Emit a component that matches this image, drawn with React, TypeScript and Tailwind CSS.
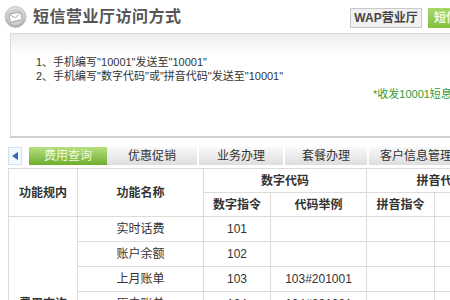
const FONT = { fontFamily: '"Liberation Sans", "Noto Sans CJK SC", sans-serif' };

const TABS = ['优惠促销', '业务办理', '套餐办理', '客户信息管理'];
const TAB_WIDTHS = ['w-[92px]', 'w-[86px]', 'w-[84px]', 'w-[96px]'];

const ROWS = [
  { name: '实时话费', code: '101', example: '' },
  { name: '账户余额', code: '102', example: '' },
  { name: '上月账单', code: '103', example: '103#201001' },
  { name: '历史账单', code: '104', example: '104#201001' },
  { name: '积分查询', code: '105', example: '' },
  { name: '套餐余量', code: '106', example: '' },
  { name: '详单查询', code: '107', example: '' },
];

function MailIcon() {
  return (
    <svg width="23" height="22" viewBox="0 0 23 22">
      <defs>
        <linearGradient id="ring" x1="0" y1="0" x2="0" y2="1">
          <stop offset="0" stopColor="#e4e4e4" />
          <stop offset="1" stopColor="#a9a9a9" />
        </linearGradient>
      </defs>
      <circle cx="11.5" cy="11" r="10.5" fill="url(#ring)" stroke="#c4c4c4" />
      <circle cx="11.5" cy="11" r="8" fill="#cfcfcf" />
      <g transform="rotate(-12 11.5 11)">
        <rect x="5.5" y="7" width="12" height="8" rx="1" fill="#fff" stroke="#9a9a9a" strokeWidth="0.8" />
        <path d="M6 7.5 L11.5 11.8 L17 7.5" fill="none" stroke="#9a9a9a" strokeWidth="0.8" />
      </g>
    </svg>
  );
}

export default function App() {
  const th = 'border border-[#dcdcdc] h-[24px] text-center font-bold text-[12px] text-[#333]';
  const td = 'border border-[#dcdcdc] h-[25px] text-center text-[12px] text-[#333]';

  return (
    <div className="w-[450px] h-[300px] overflow-hidden bg-white" style={FONT}>
      <div className="w-[560px]">
        {/* title bar */}
        <div className="flex items-center h-[33px] pl-[4px]">
          <MailIcon />
          <h1 className="ml-[6px] text-[16px] font-bold text-[#555] tracking-[0.5px]">短信营业厅访问方式</h1>
          <div className="ml-auto flex items-center gap-[6px] pr-[60px] mt-[3px]">
            <span className="w-[72px] h-[20px] flex items-center justify-center border border-[#c8c8c8] bg-[#f1f1f1] text-[12px] font-bold text-[#444]">
              WAP营业厅
            </span>
            <span className="w-[72px] h-[20px] flex items-center justify-center bg-gradient-to-b from-[#a8d96a] to-[#84c03c] text-[12px] font-bold text-[#f4fbe8]">
              短信营业厅
            </span>
          </div>
        </div>

        {/* instructions panel */}
        <div className="ml-[10px] h-[105px] border border-[#dcdcdc] border-b-2 border-b-[#cfcfcf] bg-gradient-to-b from-[#ececec] via-white via-[20%] to-white">
          <div className="pt-[21px] pl-[25px] text-[11px] leading-[14px] text-[#333]">
            <p>1、手机编写"10001"发送至"10001"</p>
            <p>2、手机编写"数字代码"或"拼音代码"发送至"10001"</p>
          </div>
          <p className="ml-[362px] mt-[3px] text-[11px] text-[#339933]">*收发10001短息免费</p>
        </div>

        {/* tabs */}
        <div className="flex items-center h-[18px] mt-[9px] ml-[8px]">
          <span className="w-[14px] h-[18px] flex items-center justify-center border border-[#cfe0ee] bg-[#f3f8fc]">
            <svg width="6" height="8" viewBox="0 0 6 8">
              <path d="M6 0 L0 4 L6 8 Z" fill="#2f6db3" />
            </svg>
          </span>
          <span className="ml-[7px] w-[78px] h-[18px] flex items-center justify-center bg-gradient-to-b from-[#b7e07e] to-[#6eae2c] text-[12px] text-[#eef8df]">
            费用查询
          </span>
          {TABS.map((t, i) => (
            <span
              key={t}
              className={`${TAB_WIDTHS[i]} h-[18px] flex items-center justify-center border-r-2 border-white bg-gradient-to-b from-[#f9f9f9] to-[#dedede] text-[12px] text-[#333]`}
            >
              {t}
            </span>
          ))}
        </div>

        {/* code table */}
        <table className="ml-[8px] mt-[3px] border-collapse table-fixed w-[506px]">
          <colgroup>
            <col className="w-[69px]" />
            <col className="w-[126px]" />
            <col className="w-[67px]" />
            <col className="w-[96px]" />
            <col className="w-[68px]" />
            <col className="w-[80px]" />
          </colgroup>
          <thead>
            <tr>
              <th rowSpan={2} className={th}>功能规内</th>
              <th rowSpan={2} className={th}>功能名称</th>
              <th colSpan={2} className={th}>数字代码</th>
              <th colSpan={2} className={th}>拼音代码</th>
            </tr>
            <tr>
              <th className={th}>数字指令</th>
              <th className={th}>代码举例</th>
              <th className={th}>拼音指令</th>
              <th className={th}>代码举例</th>
            </tr>
          </thead>
          <tbody>
            {ROWS.map((r, i) => (
              <tr key={r.name}>
                {i === 0 && (
                  <td rowSpan={ROWS.length} className={`${td} font-bold`}>
                    费用查询
                  </td>
                )}
                <td className={td}>{r.name}</td>
                <td className={td}>{r.code}</td>
                <td className={td}>{r.example}</td>
                <td className={td}></td>
                <td className={td}></td>
              </tr>
            ))}
          </tbody>
        </table>
      </div>
    </div>
  );
}
